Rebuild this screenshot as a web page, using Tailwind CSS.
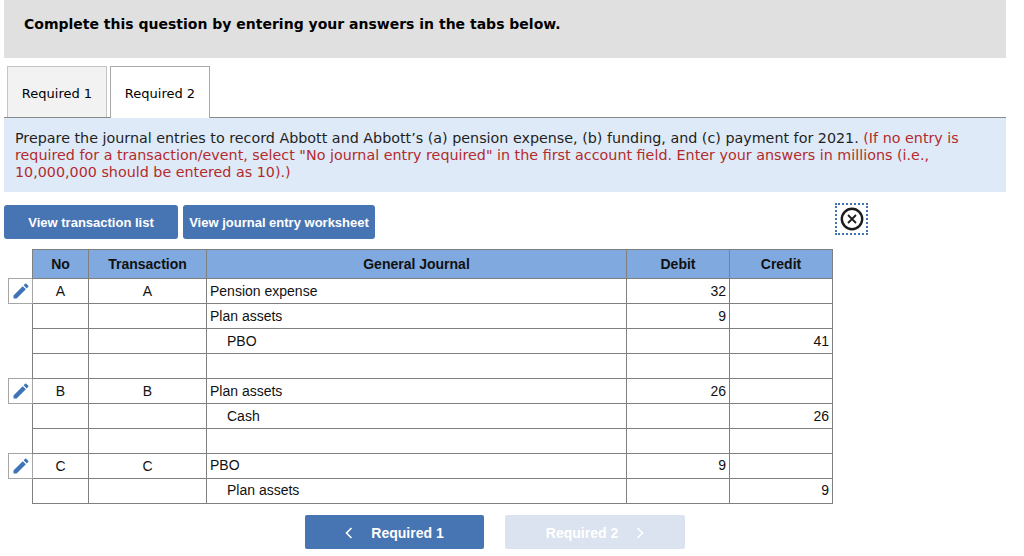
<!DOCTYPE html>
<html lang="en">
<head>
<meta charset="UTF-8">
<title>Required 2</title>
<script src="https://cdn.jsdelivr.net/npm/@tailwindcss/browser@4"></script>
</head>
<body class="bg-white w-[1024px] h-[556px] overflow-hidden font-['Liberation_Sans',sans-serif] text-black">
  <div class="ml-1 w-[1002px] h-[58px] bg-[#e0e0e0] pl-5 pt-[15px] font-['DejaVu_Sans',sans-serif] font-bold text-[14px] leading-[18px]">Complete this question by entering your answers in the tabs below.</div>

  <!-- tabs -->
  <div class="ml-1 w-[1002px] h-[60px] pt-2 pl-[3px] flex gap-[3px] items-start border-b border-[#8a8a8a] font-['DejaVu_Sans',sans-serif] text-[13px]">
    <div class="w-[100px] h-[51px] pt-[3px] flex items-center justify-center bg-[#f2f2f2] border border-[#c4c4c4] border-b-0">Required 1</div>
    <div class="w-[100px] h-[52px] pt-[2px] flex items-center justify-center bg-white border border-[#a8a8a8] border-b-0">Required 2</div>
  </div>

  <div class="ml-1 w-[1002px] h-[74px] bg-[#deeaf7] px-[11px] pt-[12px] font-['DejaVu_Sans',sans-serif] text-[14.3px] leading-[17px] text-[#1f1f1f]">
    Prepare the journal entries to record Abbott and Abbott’s (a) pension expense, (b) funding, and (c) payment for 2021. <span class="text-[#b32a2d]">(If no entry is required for a transaction/event, select "No journal entry required" in the first account field. Enter your answers in millions (i.e., 10,000,000 should be entered as 10).)</span>
  </div>

  <!-- buttons -->
  <div class="ml-1 mt-[13px] flex gap-[5px] relative h-[34px] text-white font-bold text-[13px]">
    <div class="w-[174px] pt-px rounded-[3px] bg-[#4774b2] flex items-center justify-center">View transaction list</div>
    <div class="w-[192px] pt-px rounded-[3px] bg-[#4774b2] flex items-center justify-center">View journal entry worksheet</div>
    <div class="absolute left-[831px] top-[-2px] w-[33px] h-[32px] border-[2px] border-dotted border-[#3f73b8] flex items-center justify-center">
      <svg width="24" height="24" viewBox="0 0 24 24" fill="none" stroke="#1c1c1c"><circle cx="12" cy="12" r="10.2" stroke-width="2.4"/><path d="M8 8l8 8M16 8l-8 8" stroke-width="1.8"/></svg>
    </div>
  </div>

  <!-- journal table -->
  <table class="ml-2 mt-[10px] border-collapse table-fixed w-[824px] text-[14px] text-[#111]">
    <colgroup><col class="w-[24px]"><col class="w-[56px]"><col class="w-[118px]"><col class="w-[420px]"><col class="w-[103px]"><col class="w-[103px]"></colgroup>
    <thead>
      <tr class="h-[29px] bg-[#7fa9df] font-bold">
        <th class="bg-white"></th>
        <th class="border border-[#808080] font-bold">No</th>
        <th class="border border-[#808080] font-bold">Transaction</th>
        <th class="border border-[#808080] font-bold">General Journal</th>
        <th class="border border-[#808080] font-bold">Debit</th>
        <th class="border border-[#808080] font-bold">Credit</th>
      </tr>
    </thead>
    <tbody>
      <tr class="h-[25px]">
        <td class="border border-[#a6a6a6] p-0"><svg class="mx-auto" width="20" height="20" viewBox="0 0 24 24" fill="#3f73b8"><path d="M3 17.25V21h3.75L17.81 9.94l-3.75-3.75L3 17.25zM20.71 7.04a1 1 0 0 0 0-1.41l-2.34-2.34a1 1 0 0 0-1.41 0l-1.83 1.83 3.75 3.75 1.83-1.83z"/></svg></td>
        <td class="border border-[#808080] text-center">A</td>
        <td class="border border-[#808080] text-center">A</td>
        <td class="border border-[#808080] pl-[3px]">Pension expense</td>
        <td class="border border-[#808080] text-right pr-[3px]">32</td>
        <td class="border border-[#808080]"></td>
      </tr>
      <tr class="h-[25px]">
        <td></td>
        <td class="border border-[#808080]"></td>
        <td class="border border-[#808080]"></td>
        <td class="border border-[#808080] pl-[3px]">Plan assets</td>
        <td class="border border-[#808080] text-right pr-[3px]">9</td>
        <td class="border border-[#808080]"></td>
      </tr>
      <tr class="h-[25px]">
        <td></td>
        <td class="border border-[#808080]"></td>
        <td class="border border-[#808080]"></td>
        <td class="border border-[#808080] pl-5">PBO</td>
        <td class="border border-[#808080]"></td>
        <td class="border border-[#808080] text-right pr-[3px]">41</td>
      </tr>
      <tr class="h-[25px]">
        <td></td>
        <td class="border border-[#808080]"></td>
        <td class="border border-[#808080]"></td>
        <td class="border border-[#808080]"></td>
        <td class="border border-[#808080]"></td>
        <td class="border border-[#808080]"></td>
      </tr>
      <tr class="h-[25px]">
        <td class="border border-[#a6a6a6] p-0"><svg class="mx-auto" width="20" height="20" viewBox="0 0 24 24" fill="#3f73b8"><path d="M3 17.25V21h3.75L17.81 9.94l-3.75-3.75L3 17.25zM20.71 7.04a1 1 0 0 0 0-1.41l-2.34-2.34a1 1 0 0 0-1.41 0l-1.83 1.83 3.75 3.75 1.83-1.83z"/></svg></td>
        <td class="border border-[#808080] text-center">B</td>
        <td class="border border-[#808080] text-center">B</td>
        <td class="border border-[#808080] pl-[3px]">Plan assets</td>
        <td class="border border-[#808080] text-right pr-[3px]">26</td>
        <td class="border border-[#808080]"></td>
      </tr>
      <tr class="h-[25px]">
        <td></td>
        <td class="border border-[#808080]"></td>
        <td class="border border-[#808080]"></td>
        <td class="border border-[#808080] pl-5">Cash</td>
        <td class="border border-[#808080]"></td>
        <td class="border border-[#808080] text-right pr-[3px]">26</td>
      </tr>
      <tr class="h-[25px]">
        <td></td>
        <td class="border border-[#808080]"></td>
        <td class="border border-[#808080]"></td>
        <td class="border border-[#808080]"></td>
        <td class="border border-[#808080]"></td>
        <td class="border border-[#808080]"></td>
      </tr>
      <tr class="h-[25px]">
        <td class="border border-[#a6a6a6] p-0"><svg class="mx-auto" width="20" height="20" viewBox="0 0 24 24" fill="#3f73b8"><path d="M3 17.25V21h3.75L17.81 9.94l-3.75-3.75L3 17.25zM20.71 7.04a1 1 0 0 0 0-1.41l-2.34-2.34a1 1 0 0 0-1.41 0l-1.83 1.83 3.75 3.75 1.83-1.83z"/></svg></td>
        <td class="border border-[#808080] text-center">C</td>
        <td class="border border-[#808080] text-center">C</td>
        <td class="border border-[#808080] pl-[3px] pb-px">PBO</td>
        <td class="border border-[#808080] text-right pr-[3px] pb-px">9</td>
        <td class="border border-[#808080]"></td>
      </tr>
      <tr class="h-[25px]">
        <td></td>
        <td class="border border-[#808080]"></td>
        <td class="border border-[#808080]"></td>
        <td class="border border-[#808080] pl-5 pb-px">Plan assets</td>
        <td class="border border-[#808080]"></td>
        <td class="border border-[#808080] text-right pr-[3px] pb-px">9</td>
      </tr>
    </tbody>
  </table>

  <!-- prev / next -->
  <div class="ml-[305px] mt-[11px] flex gap-[21px] text-white font-bold text-[14px]">
    <div class="w-[179px] h-[34px] pt-[2px] rounded-[2px] bg-[#4774b2] flex items-center justify-center gap-[18px]">
      <svg width="8" height="12" viewBox="0 0 8 12" fill="none" stroke="#fff" stroke-width="1.6"><path d="M6.5 1L1.5 6l5 5"/></svg>
      <span>Required 1</span>
    </div>
    <div class="w-[180px] h-[34px] pt-[2px] rounded-[2px] bg-[#dae3ef] flex items-center justify-center gap-[18px]">
      <span>Required 2</span>
      <svg width="8" height="12" viewBox="0 0 8 12" fill="none" stroke="#fff" stroke-width="1.6"><path d="M1.5 1l5 5-5 5"/></svg>
    </div>
  </div>
</body>
</html>
